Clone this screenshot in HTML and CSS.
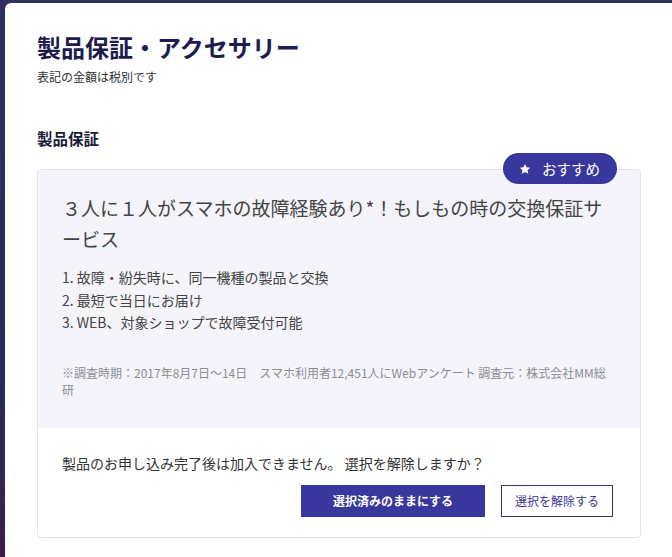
FILE: index.html
```html
<!DOCTYPE html>
<html lang="ja">
<head>
    <meta charset="UTF-8">
    <meta name="viewport" content="width=device-width, initial-scale=1.0">
    <title>製品保証・アクセサリー</title>
    <link rel="stylesheet" href="styles.css">
</head>
<body>
    <div class="modal">
        <h1>製品保証・アクセサリー</h1>
        <p class="note">表記の金額は税別です</p>

        <h2>製品保証</h2>

        <div class="card">
            <div class="badge">
                <svg class="star" viewBox="0 0 24 24" width="12" height="12">
                    <path d="M12 1.8l3.1 6.6 7.2.9-5.3 5 1.4 7.1L12 17.9l-6.4 3.5 1.4-7.1-5.3-5 7.2-.9z" fill="#fff"/>
                </svg>
                <span>おすすめ</span>
            </div>

            <div class="card-body">
                <p class="headline">３人に１人がスマホの故障経験あり*！もしもの時の交換保証サービス</p>
                <ol class="points">
                    <li>1. 故障・紛失時に、同一機種の製品と交換</li>
                    <li>2. 最短で当日にお届け</li>
                    <li>3. WEB、対象ショップで故障受付可能</li>
                </ol>
                <p class="footnote">※調査時期：2017年8月7日～14日　スマホ利用者12,451人にWebアンケート 調査元：株式会社MM総研</p>
            </div>

            <div class="card-footer">
                <p class="confirm">製品のお申し込み完了後は加入できません。 選択を解除しますか？</p>
                <div class="actions">
                    <button class="btn btn-primary">選択済みのままにする</button>
                    <button class="btn btn-outline">選択を解除する</button>
                </div>
            </div>
        </div>
    </div>
</body>
</html>
```

FILE: styles.css
```css
/* Page behind the dialog */
body {
    margin: 0;
    padding: 0;
    min-height: 557px;
    font-family: "Noto Sans CJK JP", "Noto Sans", sans-serif;
    background: linear-gradient(180deg, #30305c 0%, #2a2955 70%, #3d1c4c 100%);
    color: #333;
    overflow: hidden;
}

.modal {
    margin: 3px 0 0 5px;
    padding: 28px 31px 40px 32px;
    background-color: #fff;
    border-radius: 6px 0 0 0;
}

h1 {
    margin: 0;
    font-size: 24px;
    line-height: 32px;
    font-weight: 700;
    color: #1c1c4e;
}

.note {
    margin: 5px 0 0;
    font-size: 12px;
    line-height: 18px;
    color: #333;
}

h2 {
    margin: 41px 0 0;
    font-size: 15.5px;
    line-height: 22px;
    font-weight: 700;
    color: #1c1c3a;
}

.card {
    position: relative;
    margin-top: 20px;
    border: 1px solid #e4e4ea;
    border-radius: 4px;
}

.badge {
    position: absolute;
    top: -17px;
    right: 23px;
    height: 31px;
    padding: 0 17px 0 16px;
    display: flex;
    align-items: center;
    gap: 11px;
    background-color: #38379d;
    color: #fff;
    font-size: 14.5px;
    border-radius: 16px;
}

.star {
    display: block;
}

.card-body {
    padding: 22px 24px 29px;
    background-color: #f4f4fa;
    border-radius: 4px 4px 0 0;
}

.headline {
    margin: 0;
    max-width: 548px;
    font-size: 19px;
    line-height: 31px;
    color: #444;
    line-break: loose;
}

.points {
    list-style: none;
    margin: 12px 0 0;
    padding: 0;
    font-size: 14px;
    line-height: 22.5px;
    color: #444;
}

.footnote {
    margin: 30px 0 0;
    font-size: 12px;
    line-height: 17.5px;
    color: #8d8d94;
}

.card-footer {
    padding: 24px 27px 20px 24px;
    background-color: #fff;
    border-radius: 0 0 4px 4px;
}

.confirm {
    margin: 0;
    font-size: 14px;
    line-height: 22px;
    color: #333;
}

.actions {
    margin-top: 11px;
    display: flex;
    justify-content: flex-end;
    gap: 16px;
}

.btn {
    height: 32px;
    font-family: inherit;
    font-size: 12px;
    cursor: pointer;
    border-radius: 0;
}

.btn-primary {
    width: 184px;
    background-color: #38379d;
    color: #fff;
    border: none;
    font-weight: 700;
}

.btn-outline {
    width: 112px;
    background-color: #fff;
    color: #38379d;
    border: 1px solid #35346e;
}
```
